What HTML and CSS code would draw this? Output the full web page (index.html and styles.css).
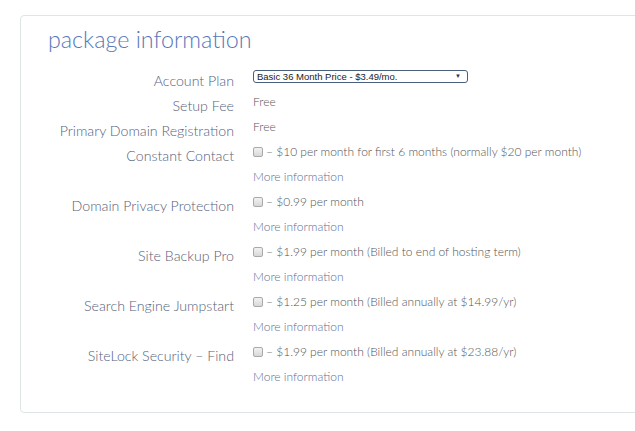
FILE: index.html
```html
<!DOCTYPE html>
<html>
<head>
<meta charset="utf-8">
<link rel="stylesheet" href="styles.css">
</head>
<body>
<div class="panel">
  <h2 class="title">package information</h2>
  <div class="form">
    <div class="label">Account Plan</div>
    <div class="value">
      <div class="line"><span class="select"><span class="select-text">Basic 36 Month Price - $3.49/mo.</span><span class="arrow">&#9660;</span></span></div>
    </div>

    <div class="label">Setup Fee</div>
    <div class="value"><div class="line">Free</div></div>

    <div class="label">Primary Domain Registration</div>
    <div class="value"><div class="line">Free</div></div>

    <div class="label">Constant Contact</div>
    <div class="value">
      <div class="line"><span class="check"></span> – $10 per month for first 6 months (normally $20 per month)</div>
      <div class="line link">More information</div>
    </div>

    <div class="label">Domain Privacy Protection</div>
    <div class="value">
      <div class="line"><span class="check"></span> – $0.99 per month</div>
      <div class="line link">More information</div>
    </div>

    <div class="label">Site Backup Pro</div>
    <div class="value">
      <div class="line"><span class="check"></span> – $1.99 per month (Billed to end of hosting term)</div>
      <div class="line link">More information</div>
    </div>

    <div class="label">Search Engine Jumpstart</div>
    <div class="value">
      <div class="line"><span class="check"></span> – $1.25 per month (Billed annually at $14.99/yr)</div>
      <div class="line link">More information</div>
    </div>

    <div class="label">SiteLock Security – Find</div>
    <div class="value">
      <div class="line"><span class="check"></span> – $1.99 per month (Billed annually at $23.88/yr)</div>
      <div class="line link">More information</div>
    </div>
  </div>
</div>
</body>
</html>
```

FILE: styles.css
```css
html, body {
  margin: 0;
  padding: 0;
  background: #ffffff;
  overflow: hidden;
}

body {
  font-family: Lato, "Open Sans", sans-serif;
  font-weight: 300;
}

.panel {
  margin: 15px 0 0 20px;
  width: 640px;
  height: 398px;
  border: 1px solid #dde5e7;
  border-radius: 4px;
  box-sizing: border-box;
}

.title {
  margin: 0;
  padding: 8px 0 0 27px;
  font-size: 23.3px;
  line-height: 30px;
  font-weight: 300;
  color: #5878b8;
  height: 48px;
  box-sizing: border-box;
}

.form {
  display: grid;
  grid-template-columns: 213px 1fr;
  column-gap: 19px;
}

.label {
  text-align: right;
  font-size: 14.2px;
  line-height: 17px;
  height: 25px;
  padding-top: 8px;
  box-sizing: border-box;
  color: #56627a;
  white-space: nowrap;
}

.value {
  font-size: 12px;
  color: #555555;
}

.line {
  height: 25px;
  line-height: 25px;
  white-space: nowrap;
  display: flex;
  align-items: center;
}

.link {
  color: #5a6f98;
}

.check {
  display: inline-block;
  width: 8px;
  height: 8px;
  border: 1px solid #a9a9a9;
  border-radius: 2px;
  background: linear-gradient(#f2f2f2, #d8d8d8);
  margin-right: 3px;
}

.select {
  display: inline-flex;
  align-items: center;
  justify-content: space-between;
  width: 215px;
  height: 13px;
  border: 1px solid #4a5f7d;
  border-radius: 3px;
  box-sizing: border-box;
  padding: 0 6px 0 3px;
  font-family: "Liberation Sans", Arial, sans-serif;
  font-weight: 400;
  font-size: 9.5px;
  color: #222222;
  line-height: 11px;
}

.arrow {
  font-size: 6px;
  color: #333333;
}
```
